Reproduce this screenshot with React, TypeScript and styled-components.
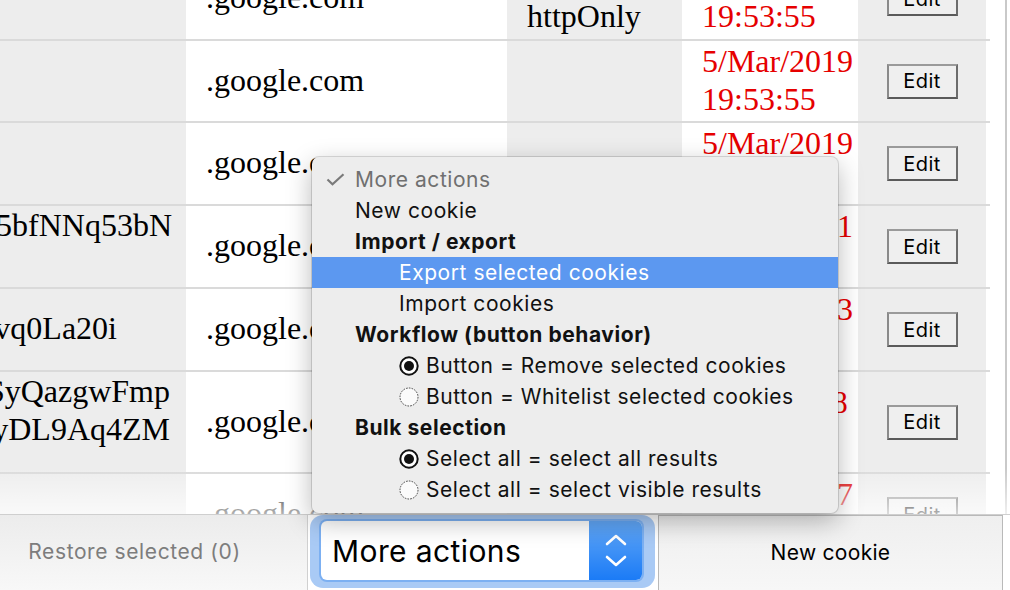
import styled, { createGlobalStyle } from 'styled-components'

const GlobalStyle = createGlobalStyle`
	html, body {
		margin: 0;
		padding: 0;
		background: #ffffff;
	}
	body {
		width: 1010px;
		height: 590px;
		overflow: hidden;
	}
`

const Page = styled.div`
	position: relative;
	width: 1010px;
	height: 590px;
	display: flex;
	flex-direction: column;
	overflow: hidden;
`

const TableArea = styled.div`
	position: relative;
	flex: 1;
	min-height: 0;
	display: flex;
	overflow: hidden;
`

const Table = styled.div`
	width: 990px;
	margin-top: -42px;
	display: flex;
	flex-direction: column;
`

const Row = styled.div<{ $h: number }>`
	display: grid;
	grid-template-columns: 186px 321px 175px 176px 128px 1fr;
	height: ${(p) => p.$h}px;
	flex-shrink: 0;
	box-sizing: border-box;
	border-bottom: 2px solid #dadada;
`

const Cell = styled.div<{ $grey?: boolean; $red?: boolean }>`
	display: flex;
	flex-direction: column;
	justify-content: center;
	padding: 0 18px 3px 20px;
	background: ${(p) => (p.$grey ? '#ededed' : '#ffffff')};
	color: ${(p) => (p.$red ? '#e60000' : '#000000')};
	font-family: 'Liberation Serif', 'Times New Roman', serif;
	font-size: 32px;
	line-height: 38px;
	white-space: nowrap;
	overflow: hidden;
`

const NameCell = styled.div<{ $top?: boolean; $pad: number }>`
	display: flex;
	flex-direction: column;
	justify-content: ${(p) => (p.$top ? 'flex-start' : 'center')};
	align-items: flex-end;
	padding-right: ${(p) => p.$pad}px;
	padding-bottom: 3px;
	background: #ededed;
	font-family: 'Liberation Serif', 'Times New Roman', serif;
	font-size: 32px;
	line-height: 38px;
	white-space: nowrap;
	overflow: hidden;
`

const ButtonCell = styled.div`
	display: flex;
	align-items: center;
	justify-content: center;
	background: #ededed;
`

const EditButton = styled.button`
	width: 71px;
	height: 35px;
	padding: 0;
	box-sizing: border-box;
	background: #efefef;
	border: 2px solid;
	border-color: #9a9a9a #6c6c6c #5a5a5a #8a8a8a;
	font-family: Inter, 'Liberation Sans', sans-serif;
	font-size: 20px;
	letter-spacing: 0.4px;
	color: #000000;
`

const Gutter = styled.div`
	flex: 1;
	display: flex;
	padding-left: 15px;
	background: #ffffff;
`

const GutterLine = styled.div`
	width: 2px;
	background: #c9c9c9;
`

const Fade = styled.div`
	position: absolute;
	left: 0;
	right: 0;
	bottom: 0;
	height: 46px;
	background: linear-gradient(rgba(255, 255, 255, 0), rgba(255, 255, 255, 0.7));
	pointer-events: none;
`

const Footer = styled.div`
	height: 76px;
	flex-shrink: 0;
	display: flex;
	box-sizing: border-box;
	border-top: 1px solid #cfcfcf;
	font-family: Inter, 'Liberation Sans', sans-serif;
`

const RestoreButton = styled.div`
	width: 308px;
	box-sizing: border-box;
	display: flex;
	align-items: center;
	justify-content: center;
	padding: 0 38px 2px 0;
	background: linear-gradient(#ececec, #f8f8f8);
	border-right: 1px solid #d0d0d0;
	color: #7d7d7d;
	font-size: 21px;
	letter-spacing: 0.6px;
`

const SelectSlot = styled.div`
	width: 350px;
	box-sizing: border-box;
	padding: 0 3px 2px 2px;
	display: flex;
`

const FocusRing = styled.div`
	flex: 1;
	display: flex;
	padding: 6px 13px 8px 11px;
	border-radius: 13px;
	background: #a9caf5;
`

const SelectBox = styled.div`
	flex: 1;
	display: flex;
	border-radius: 6px;
	overflow: hidden;
	background: #ffffff;
	box-shadow: 0 0 0 2px #7cb0f2;
`

const SelectLabel = styled.div`
	flex: 1;
	display: flex;
	align-items: center;
	padding-left: 11px;
	font-size: 30px;
	letter-spacing: 0.4px;
	color: #000000;
`

const Stepper = styled.div`
	width: 53px;
	display: flex;
	align-items: center;
	justify-content: center;
	background: linear-gradient(#62a7f6, #1b7bf6);
`

const NewCookieButton = styled.div`
	width: 345px;
	box-sizing: border-box;
	display: flex;
	align-items: center;
	justify-content: center;
	padding-bottom: 2px;
	background: linear-gradient(#efefef, #f7f7f7);
	border: 1px solid #b9b9b9;
	border-bottom: none;
	font-size: 21px;
	letter-spacing: 0.3px;
	color: #000000;
`

const Popup = styled.div`
	position: absolute;
	left: 312px;
	top: 157px;
	width: 526px;
	box-sizing: border-box;
	padding: 7px 0 8px 0;
	background: #ededed;
	border-radius: 7px;
	box-shadow: 0 0 0 1px rgba(0, 0, 0, 0.13), 0 8px 26px rgba(0, 0, 0, 0.28);
	font-family: Inter, 'Liberation Sans', sans-serif;
	font-size: 21px;
	letter-spacing: 0.55px;
`

const MenuItem = styled.div<{ $indent: number; $bold?: boolean; $active?: boolean; $muted?: boolean }>`
	height: 31px;
	display: flex;
	align-items: center;
	gap: 7px;
	padding-left: ${(p) => p.$indent}px;
	font-weight: ${(p) => (p.$bold ? 700 : 400)};
	background: ${(p) => (p.$active ? '#5c98f0' : 'transparent')};
	color: ${(p) => (p.$active ? '#ffffff' : p.$muted ? '#707070' : '#111111')};
	white-space: nowrap;
`

const CheckSlot = styled.span`
	width: 22px;
	display: flex;
	align-items: center;
`

const Check = () => (
	<svg width="19" height="13" viewBox="0 0 19 13">
		<path d="M1.5 6.5 L6.5 11.2 L17.5 1.2" fill="none" stroke="#7a7a7a" strokeWidth="2.2" />
	</svg>
)

const Radio = ({ on }: { on: boolean }) => (
	<svg width="20" height="20" viewBox="0 0 20 20">
		{on ? (
			<>
				<circle cx="10" cy="10" r="8.7" fill="#ffffff" stroke="#111111" strokeWidth="2" />
				<circle cx="10" cy="10" r="5" fill="#111111" />
			</>
		) : (
			<circle cx="10" cy="10" r="9" fill="#fbfbfb" stroke="#444444" strokeWidth="1" strokeDasharray="1.6 1.2" />
		)}
	</svg>
)

const Chevrons = () => (
	<svg width="26" height="36" viewBox="0 0 26 36">
		<path d="M4 11 L13 3 L22 11" fill="none" stroke="#ffffff" strokeWidth="2.6" strokeLinecap="round" strokeLinejoin="round" />
		<path d="M4 24 L13 32 L22 24" fill="none" stroke="#ffffff" strokeWidth="2.6" strokeLinecap="round" strokeLinejoin="round" />
	</svg>
)

type Cookie = {
	h: number
	name: string[]
	nameTop?: boolean
	namePad: number
	domain: string
	flags: string[]
	date: string[]
}

const rows: Cookie[] = [
	{ h: 83, name: [], namePad: 17, domain: '.google.com', flags: ['secure', 'httpOnly'], date: ['5/Mar/2019', '19:53:55'] },
	{ h: 82, name: [], namePad: 17, domain: '.google.com', flags: [], date: ['5/Mar/2019', '19:53:55'] },
	{ h: 83, name: [], namePad: 17, domain: '.google.com', flags: ['secure'], date: ['5/Mar/2019', '19:53:55'] },
	{ h: 83, name: ['5bfNNq53bN'], nameTop: true, namePad: 14, domain: '.google.com', flags: [], date: ['5/Mar/2021', '19:53:55'] },
	{ h: 83, name: ['vq0La20i'], namePad: 69, domain: '.google.com', flags: [], date: ['5/Mar/2023', '19:53:55'] },
	{ h: 102, name: ['SyQazgwFmp', 'yDL9Aq4ZM'], nameTop: true, namePad: 16, domain: '.google.com', flags: [], date: ['5/Sep/2018', '19:53:58'] },
	{ h: 83, name: [], namePad: 17, domain: '.google.com', flags: [], date: ['5/Mar/2017', '19:53:57'] },
]

const App = () => {
	return (
		<Page>
			<GlobalStyle />
			<TableArea>
				<Table>
					{rows.map((r, i) => (
						<Row key={i} $h={r.h}>
							<NameCell $top={r.nameTop} $pad={r.namePad}>
								{r.name.map((n) => (
									<span key={n}>{n}</span>
								))}
							</NameCell>
							<Cell>{r.domain}</Cell>
							<Cell $grey>
								{r.flags.map((f) => (
									<span key={f}>{f}</span>
								))}
							</Cell>
							<Cell $red>
								{r.date.map((d) => (
									<span key={d}>{d}</span>
								))}
							</Cell>
							<ButtonCell>
								<EditButton>Edit</EditButton>
							</ButtonCell>
							<div />
						</Row>
					))}
				</Table>
				<Gutter>
					<GutterLine />
				</Gutter>
				<Fade />
			</TableArea>
			<Footer>
				<RestoreButton>Restore selected (0)</RestoreButton>
				<SelectSlot>
					<FocusRing>
						<SelectBox>
							<SelectLabel>More actions</SelectLabel>
							<Stepper>
								<Chevrons />
							</Stepper>
						</SelectBox>
					</FocusRing>
				</SelectSlot>
				<NewCookieButton>New cookie</NewCookieButton>
			</Footer>
			<Popup>
				<MenuItem $indent={14} $muted>
					<CheckSlot>
						<Check />
					</CheckSlot>
					More actions
				</MenuItem>
				<MenuItem $indent={43}>New cookie</MenuItem>
				<MenuItem $indent={43} $bold>
					Import / export
				</MenuItem>
				<MenuItem $indent={87} $active>
					Export selected cookies
				</MenuItem>
				<MenuItem $indent={87}>Import cookies</MenuItem>
				<MenuItem $indent={43} $bold>
					Workflow (button behavior)
				</MenuItem>
				<MenuItem $indent={87}>
					<Radio on />
					Button = Remove selected cookies
				</MenuItem>
				<MenuItem $indent={87}>
					<Radio on={false} />
					Button = Whitelist selected cookies
				</MenuItem>
				<MenuItem $indent={43} $bold>
					Bulk selection
				</MenuItem>
				<MenuItem $indent={87}>
					<Radio on />
					Select all = select all results
				</MenuItem>
				<MenuItem $indent={87}>
					<Radio on={false} />
					Select all = select visible results
				</MenuItem>
			</Popup>
		</Page>
	)
}

export default App
